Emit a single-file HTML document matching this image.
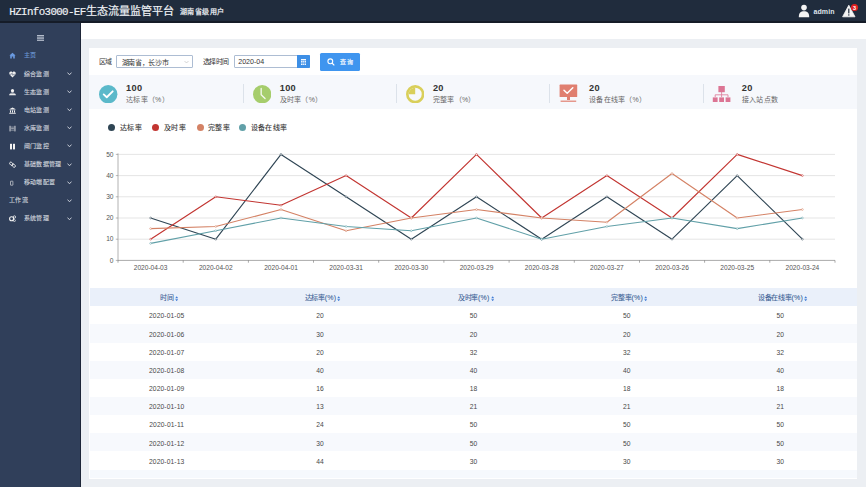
<!DOCTYPE html>
<html lang="zh-CN"><head><meta charset="utf-8">
<style>
*{margin:0;padding:0;box-sizing:border-box}
html,body{width:866px;height:487px;overflow:hidden;background:#eceff3;font-family:"Liberation Sans",sans-serif}
.abs{position:absolute}
#hdr{position:absolute;left:0;top:0;width:866px;height:21px;background:#202c3d}
#hdrline{position:absolute;left:0;top:21px;width:866px;height:1.6px;background:#151c28}
#title{position:absolute;left:9px;top:3.5px;color:#f2f4f8;font-size:10.4px;white-space:nowrap;line-height:14px}
#title .m{font-family:"Liberation Mono",monospace;font-size:9.7px;letter-spacing:-0.05px}
#title .sub{font-size:7.3px;font-weight:bold;margin-left:4px;vertical-align:0.5px}
#side{position:absolute;left:0;top:22.6px;width:80.5px;height:465px;background:#303f5a}
#sideedge{position:absolute;left:80px;top:22.6px;width:1px;height:465px;background:#1e2638}
.si{position:absolute;left:0;width:80px;height:18px;color:#c9ced8;font-size:6px;letter-spacing:0.22px;line-height:18px}
.si .t{position:absolute;left:24px;top:0;-webkit-text-stroke:0.12px currentColor}
.si .ic{position:absolute;left:9px;top:6px;width:7px;height:7px}
.si .ch{position:absolute;left:67.2px;top:7.6px;width:5px;height:3.6px}
#tabbar{position:absolute;left:81px;top:22.6px;width:785px;height:16.2px;background:#fff}
#card{position:absolute;left:89px;top:47.5px;width:768px;height:431px;background:#fff}
.lbl{position:absolute;font-size:7px;letter-spacing:-0.42px;color:#333;line-height:8px;white-space:nowrap}
#sel{position:absolute;left:116.4px;top:55.1px;width:76.2px;height:13.4px;border:0.7px solid #adbdd3;border-radius:1px;background:#fff}
#sel span{position:absolute;left:4.2px;top:2.6px;font-size:7px;letter-spacing:-0.32px;color:#333;line-height:8px;white-space:nowrap}
#date{position:absolute;left:233.7px;top:55.3px;width:76px;height:13px;border:0.7px solid #adbdd3;border-radius:1px;background:#fff}
#date span{position:absolute;left:3.5px;top:1.8px;font-size:7.1px;color:#333;line-height:8px}
#addon{position:absolute;left:297.3px;top:55.3px;width:12.6px;height:13px;background:#3d8fe6;border-radius:0 1px 1px 0}
#btn{position:absolute;left:319.8px;top:53.2px;width:40px;height:17.6px;background:#3f95ef;border-radius:1.5px}
#btn span{position:absolute;left:20.5px;top:4.5px;font-size:6px;letter-spacing:0.3px;color:#fff;line-height:8px;-webkit-text-stroke:0.15px #fff}
#stats{position:absolute;left:89px;top:75px;width:768px;height:33.6px;background:#f6f8fc}
.num{position:absolute;font-size:9.2px;font-weight:bold;color:#333;line-height:10px;letter-spacing:0.35px}
.sl{position:absolute;font-size:7px;letter-spacing:0.26px;color:#666;line-height:8px;white-space:nowrap}
.div{position:absolute;top:83.5px;width:0.8px;height:19px;background:#dce2ea}
.leg{position:absolute;font-size:7px;letter-spacing:0.3px;color:#333;line-height:9px;white-space:nowrap;top:123px;-webkit-text-stroke:0.1px #333}
.dot{position:absolute;width:7px;height:7px;border-radius:50%;top:124px}
#chart{position:absolute;left:0;top:0}
#chart text{font-size:6.6px;fill:#555;font-family:"Liberation Sans",sans-serif}
#thead{position:absolute;left:90px;top:287.8px;width:767px;height:17.8px;background:#eaf0fa}
.th{position:absolute;top:1.6px;padding-left:5px;width:153.4px;text-align:center;font-size:7px;letter-spacing:-0.3px;color:#3b5f95;line-height:17.5px;white-space:nowrap;-webkit-text-stroke:0.08px #3b5f95}
.tr{position:absolute;left:90px;width:767px;height:18.15px}
.td{position:absolute;top:1.2px;width:153.4px;text-align:center;font-size:6.7px;color:#474747;line-height:18.15px;letter-spacing:0.12px}
#tfoot{position:absolute;left:90px;top:469.7px;width:767px;height:8.8px;background:#f6f9fd}
</style></head><body>
<div id="hdr"></div><div id="hdrline"></div>
<div class="abs m" style="left:9.3px;top:3px;transform:scaleY(1.09);transform-origin:0 0;color:#eef1f5;font-family:'Liberation Mono',monospace;font-size:10.8px;line-height:16px;letter-spacing:-0.61px;white-space:nowrap;-webkit-text-stroke:0.18px #eef1f5">HZInfo3000-EF</div>
<div class="abs" style="left:85.5px;top:3.4px;color:#eef1f5;font-size:11px;line-height:16px;white-space:nowrap;-webkit-text-stroke:0.2px #eef1f5">生态流量监管平台</div>
<div class="abs" style="left:179.8px;top:6.6px;color:#e6e9ee;font-size:7px;letter-spacing:0.45px;line-height:10px;white-space:nowrap;-webkit-text-stroke:0.25px #e6e9ee">湖南省级用户</div>
<!-- user -->
<svg class="abs" style="left:797px;top:4px" width="14" height="14" viewBox="0 0 14 14">
 <circle cx="7" cy="3.6" r="2.8" fill="#f4f4f4"/>
 <path d="M1.8 13.2 C1.8 8.6 3.8 7.2 7 7.2 C10.2 7.2 12.2 8.6 12.2 13.2 Z" fill="#f4f4f4"/>
</svg>
<div class="abs" style="left:813.5px;top:6.6px;font-size:7px;font-weight:bold;color:#dfe3ea;letter-spacing:0.1px;line-height:9px">admin</div>
<svg class="abs" style="left:842px;top:3px" width="24" height="16" viewBox="0 0 24 16">
 <path d="M6.8 2.2 L13 13.8 L0.6 13.8 Z" fill="#f4f4f4" stroke="#f4f4f4" stroke-width="0.8" stroke-linejoin="round"/>
 <rect x="6.2" y="5.6" width="1.2" height="4.8" fill="#202c3d"/>
 <rect x="6.2" y="11.3" width="1.2" height="1.3" fill="#202c3d"/>
 <circle cx="12.5" cy="4.5" r="3.6" fill="#e02020"/>
 <text x="12.5" y="6.6" font-size="5.5" fill="#fff" text-anchor="middle" font-family="Liberation Sans" font-weight="bold">3</text>
</svg>

<div id="side"></div><div id="sideedge"></div>
<svg class="abs" style="left:36.7px;top:34.9px" width="7.4" height="5.9" viewBox="0 0 7.4 5.9">
 <rect x="0" y="0" width="7.4" height="1.05" fill="#b4bdcc"/><rect x="0" y="1.62" width="7.4" height="1.05" fill="#b4bdcc"/><rect x="0" y="3.24" width="7.4" height="1.05" fill="#b4bdcc"/><rect x="0" y="4.85" width="7.4" height="1.05" fill="#b4bdcc"/>
</svg>
<div class="si" style="top:46.2px;color:#6e9ad8"><span class="t" style="left:24px">主页</span><svg class="ic" viewBox="0 0 7 7"><path d="M3.5 0.8 L6.6 3.6 L5.8 3.6 L5.8 6.4 L4.2 6.4 L4.2 4.6 L2.8 4.6 L2.8 6.4 L1.2 6.4 L1.2 3.6 L0.4 3.6 Z" fill="#6a9ae0"/></svg></div>
<div class="si" style="top:64.5px;color:#cdd2db"><span class="t" style="left:24px">综合监测</span><svg class="ic" viewBox="0 0 7 7"><path d="M3.5 6.6 L0.6 3.4 C-0.2 2.2 0.6 0.6 1.9 0.6 C2.7 0.6 3.2 1.1 3.5 1.6 C3.8 1.1 4.3 0.6 5.1 0.6 C6.4 0.6 7.2 2.2 6.4 3.4 Z" fill="#f2f2f2"/><path d="M0.8 3.3 L2.4 3.3 L3 2.2 L3.9 4.4 L4.5 3.3 L6.2 3.3" fill="none" stroke="#303f5a" stroke-width="0.5"/></svg><svg class="ch" viewBox="0 0 5 3.6"><path d="M0.5 0.6 L2.5 2.8 L4.5 0.6" fill="none" stroke="#c9ced8" stroke-width="1"/></svg></div>
<div class="si" style="top:82.6px;color:#cdd2db"><span class="t" style="left:24px">生态监测</span><svg class="ic" viewBox="0 0 7 7"><circle cx="3.5" cy="1.7" r="1.6" fill="#f2f2f2"/><path d="M0.1 6.2 C0.3 4.2 1.6 3.4 3.5 3.4 C5.4 3.4 6.7 4.2 6.9 6.2 Z" fill="#f2f2f2"/><rect x="0" y="4.6" width="7" height="0.45" fill="#303f5a"/></svg><svg class="ch" viewBox="0 0 5 3.6"><path d="M0.5 0.6 L2.5 2.8 L4.5 0.6" fill="none" stroke="#c9ced8" stroke-width="1"/></svg></div>
<div class="si" style="top:100.7px;color:#cdd2db"><span class="t" style="left:24px">电站监测</span><svg class="ic" viewBox="0 0 7 7"><path d="M3.5 0.5 L6.8 2.2 L0.2 2.2 Z" fill="#f2f2f2"/><rect x="0.6" y="2.6" width="5.8" height="0.6" fill="#f2f2f2"/><rect x="1" y="3.4" width="1" height="2.2" fill="#f2f2f2"/><rect x="3" y="3.4" width="1" height="2.2" fill="#f2f2f2"/><rect x="5" y="3.4" width="1" height="2.2" fill="#f2f2f2"/><rect x="0.2" y="5.8" width="6.6" height="0.9" fill="#f2f2f2"/></svg><svg class="ch" viewBox="0 0 5 3.6"><path d="M0.5 0.6 L2.5 2.8 L4.5 0.6" fill="none" stroke="#c9ced8" stroke-width="1"/></svg></div>
<div class="si" style="top:118.8px;color:#cdd2db"><span class="t" style="left:24px">水库监测</span><svg class="ic" viewBox="0 0 7 7"><rect x="0.6" y="0.8" width="0.9" height="5.6" fill="#f2f2f2"/><rect x="5.5" y="0.8" width="0.9" height="5.6" fill="#f2f2f2"/><rect x="2.1" y="1.8" width="2.8" height="0.5" fill="#f2f2f2"/><rect x="2.1" y="3.3" width="2.8" height="0.5" fill="#f2f2f2"/><rect x="2.1" y="4.8" width="2.8" height="0.5" fill="#f2f2f2"/></svg><svg class="ch" viewBox="0 0 5 3.6"><path d="M0.5 0.6 L2.5 2.8 L4.5 0.6" fill="none" stroke="#c9ced8" stroke-width="1"/></svg></div>
<div class="si" style="top:136.9px;color:#cdd2db"><span class="t" style="left:24px">闸门监控</span><svg class="ic" viewBox="0 0 7 7"><rect x="1" y="0.8" width="2" height="5.6" fill="#f2f2f2"/><rect x="4" y="0.8" width="2" height="5.6" fill="#f2f2f2"/></svg><svg class="ch" viewBox="0 0 5 3.6"><path d="M0.5 0.6 L2.5 2.8 L4.5 0.6" fill="none" stroke="#c9ced8" stroke-width="1"/></svg></div>
<div class="si" style="top:155.0px;color:#cdd2db"><span class="t" style="left:24px">基础数据管理</span><svg class="ic" viewBox="0 0 7 7"><rect x="0.4" y="1.6" width="3.8" height="2.4" rx="1.2" transform="rotate(45 2.3 2.8)" fill="none" stroke="#f2f2f2" stroke-width="0.9"/><rect x="2.8" y="3.4" width="3.8" height="2.4" rx="1.2" transform="rotate(45 4.7 4.6)" fill="none" stroke="#f2f2f2" stroke-width="0.9"/></svg><svg class="ch" viewBox="0 0 5 3.6"><path d="M0.5 0.6 L2.5 2.8 L4.5 0.6" fill="none" stroke="#c9ced8" stroke-width="1"/></svg></div>
<div class="si" style="top:173.1px;color:#cdd2db"><span class="t" style="left:24px">移动端配置</span><svg class="ic" viewBox="0 0 7 7"><rect x="1.5" y="2.2" width="2.4" height="4" rx="0.3" fill="none" stroke="#f2f2f2" stroke-width="0.6"/></svg><svg class="ch" viewBox="0 0 5 3.6"><path d="M0.5 0.6 L2.5 2.8 L4.5 0.6" fill="none" stroke="#c9ced8" stroke-width="1"/></svg></div>
<div class="si" style="top:191.2px;color:#cdd2db"><span class="t" style="left:9.2px">工作流</span><svg class="ch" viewBox="0 0 5 3.6"><path d="M0.5 0.6 L2.5 2.8 L4.5 0.6" fill="none" stroke="#c9ced8" stroke-width="1"/></svg></div>
<div class="si" style="top:209.3px;color:#cdd2db"><span class="t" style="left:24px">系统管理</span><svg class="ic" viewBox="0 0 7 7"><circle cx="2.6" cy="3.8" r="2" fill="none" stroke="#f2f2f2" stroke-width="1.1"/><circle cx="5.4" cy="2" r="1.2" fill="none" stroke="#f2f2f2" stroke-width="0.8"/><circle cx="5.4" cy="5.6" r="1" fill="none" stroke="#f2f2f2" stroke-width="0.7"/></svg><svg class="ch" viewBox="0 0 5 3.6"><path d="M0.5 0.6 L2.5 2.8 L4.5 0.6" fill="none" stroke="#c9ced8" stroke-width="1"/></svg></div>

<div id="tabbar"></div>
<div id="card"></div>
<div class="lbl" style="left:98.5px;top:58.2px">区域</div>
<div id="sel"><span>湖南省，长沙市</span>
 <svg class="abs" style="left:67px;top:4.3px" width="5" height="4" viewBox="0 0 5 4"><path d="M0.5 1 L2.5 3 L4.5 1" fill="none" stroke="#bbb" stroke-width="0.6"/></svg>
</div>
<div class="lbl" style="left:202.5px;top:58.2px">选择时间</div>
<div id="date"><span>2020-04</span></div>
<div id="addon"><svg class="abs" style="left:3.6px;top:3.4px" width="5.6" height="6" viewBox="0 0 5.6 6">
 <rect x="0" y="0" width="5.6" height="6" fill="#f4f8fe"/><rect x="0" y="1.4" width="5.6" height="0.55" fill="#3d8fe6"/><rect x="0" y="2.95" width="5.6" height="0.5" fill="#3d8fe6"/><rect x="0" y="4.45" width="5.6" height="0.5" fill="#3d8fe6"/><rect x="1.6" y="1.4" width="0.5" height="4.6" fill="#3d8fe6"/><rect x="3.5" y="1.4" width="0.5" height="4.6" fill="#3d8fe6"/></svg></div>
<div id="btn"><svg class="abs" style="left:7.5px;top:4.7px" width="8" height="8" viewBox="0 0 8 8"><circle cx="3.3" cy="3.3" r="2.4" fill="none" stroke="#fff" stroke-width="1.1"/><path d="M5 5 L7.3 7.3" stroke="#fff" stroke-width="1.2"/></svg><span>查询</span></div>

<div id="stats"></div>
<svg class="abs" style="left:99.2px;top:84.8px" width="18.4" height="18.4" viewBox="0 0 18 18"><circle cx="9" cy="9" r="9" fill="#5bb9ca"/><path d="M4.6 9.2 L7.6 12 L13.4 6.2" fill="none" stroke="#fff" stroke-width="1.8" stroke-linecap="round" stroke-linejoin="round"/></svg><div class="num" style="left:126px;top:83px">100</div><div class="sl" style="left:126px;top:95.6px">达标率（%）</div>
<div class="div" style="left:243px"></div><svg class="abs" style="left:252.6px;top:84.6px" width="18.4" height="18.4" viewBox="0 0 18 18"><circle cx="9" cy="9" r="9" fill="#a6cd6c"/><path d="M8 3.4 L8 9.6 L11.8 13.2" fill="none" stroke="#f4f8ee" stroke-width="1.3" stroke-linecap="round" stroke-linejoin="round"/></svg><div class="num" style="left:279.7px;top:83px">100</div><div class="sl" style="left:279.7px;top:95.6px">及时率（%）</div>
<div class="div" style="left:396.2px"></div><svg class="abs" style="left:406px;top:84.9px" width="18.4" height="18.4" viewBox="0 0 18 18"><circle cx="9" cy="9" r="7.7" fill="none" stroke="#d9cf5a" stroke-width="2.6"/><path d="M9 9 L9 2.6 A6.4 6.4 0 0 0 2.6 9 Z" fill="#d9cf5a"/></svg><div class="num" style="left:432.9px;top:83px">20</div><div class="sl" style="left:432.9px;top:95.6px">完整率（%）</div>
<div class="div" style="left:549px"></div><svg class="abs" style="left:559px;top:84px" width="19" height="19" viewBox="0 0 19 19"><rect x="0.6" y="0.6" width="17.6" height="12.4" rx="0.6" fill="#e07f70"/><path d="M5 6.2 L8.2 9.2 L13.8 3.8" fill="none" stroke="#fff" stroke-width="1.5" stroke-linecap="round" stroke-linejoin="round"/><rect x="8" y="13" width="3" height="3" fill="#e07f70"/><rect x="1.6" y="16.6" width="15.6" height="1.2" fill="#e07f70"/></svg><div class="num" style="left:589px;top:83px">20</div><div class="sl" style="left:589px;top:95.6px">设备在线率（%）</div>
<div class="div" style="left:703px"></div><svg class="abs" style="left:712px;top:84.6px" width="19" height="18" viewBox="0 0 19 18"><rect x="6.4" y="1" width="6.4" height="6.2" fill="#dc7594"/><path d="M9.6 7 L9.6 9.8 M3.2 12 L3.2 9.8 L16 9.8 L16 12 M9.6 9.8 L9.6 12" fill="none" stroke="#dc7594" stroke-width="0.8"/><rect x="0.8" y="12.4" width="4.8" height="4.6" fill="#dc7594"/><rect x="7.2" y="12.4" width="4.8" height="4.6" fill="#dc7594"/><rect x="13.6" y="12.4" width="4.8" height="4.6" fill="#dc7594"/></svg><div class="num" style="left:741.8px;top:83px">20</div><div class="sl" style="left:741.8px;top:95.6px">接入站点数</div>

<div class="dot" style="left:108.0px;background:#2f4554"></div><div class="leg" style="left:120.2px">达标率</div>
<div class="dot" style="left:151.7px;background:#c23531"></div><div class="leg" style="left:164px">及时率</div>
<div class="dot" style="left:196.5px;background:#d48265"></div><div class="leg" style="left:208px">完整率</div>
<div class="dot" style="left:239.3px;background:#61a0a8"></div><div class="leg" style="left:250.9px">设备在线率</div>

<svg id="chart" width="866" height="487" viewBox="0 0 866 487">
<line x1="118" y1="239.2" x2="835" y2="239.2" stroke="#e2e2e2" stroke-width="0.9"/>
<text x="113.5" y="241.4" text-anchor="end">10</text>
<line x1="118" y1="218.0" x2="835" y2="218.0" stroke="#e2e2e2" stroke-width="0.9"/>
<text x="113.5" y="220.2" text-anchor="end">20</text>
<line x1="118" y1="196.8" x2="835" y2="196.8" stroke="#e2e2e2" stroke-width="0.9"/>
<text x="113.5" y="199.0" text-anchor="end">30</text>
<line x1="118" y1="175.6" x2="835" y2="175.6" stroke="#e2e2e2" stroke-width="0.9"/>
<text x="113.5" y="177.8" text-anchor="end">40</text>
<line x1="118" y1="154.4" x2="835" y2="154.4" stroke="#e2e2e2" stroke-width="0.9"/>
<text x="113.5" y="156.6" text-anchor="end">50</text>
<text x="113.5" y="262.6" text-anchor="end">0</text>
<line x1="118" y1="153.4" x2="118" y2="260.4" stroke="#999" stroke-width="0.75"/>
<line x1="115.8" y1="260.4" x2="118" y2="260.4" stroke="#8a8a8a" stroke-width="0.6"/>
<line x1="115.8" y1="239.2" x2="118" y2="239.2" stroke="#8a8a8a" stroke-width="0.6"/>
<line x1="115.8" y1="218.0" x2="118" y2="218.0" stroke="#8a8a8a" stroke-width="0.6"/>
<line x1="115.8" y1="196.8" x2="118" y2="196.8" stroke="#8a8a8a" stroke-width="0.6"/>
<line x1="115.8" y1="175.6" x2="118" y2="175.6" stroke="#8a8a8a" stroke-width="0.6"/>
<line x1="115.8" y1="154.4" x2="118" y2="154.4" stroke="#8a8a8a" stroke-width="0.6"/>
<line x1="118" y1="260.4" x2="835" y2="260.4" stroke="#6e6e6e" stroke-width="0.6"/>
<line x1="118.0" y1="260.4" x2="118.0" y2="262.7" stroke="#6e6e6e" stroke-width="0.6"/>
<line x1="183.2" y1="260.4" x2="183.2" y2="262.7" stroke="#6e6e6e" stroke-width="0.6"/>
<line x1="248.4" y1="260.4" x2="248.4" y2="262.7" stroke="#6e6e6e" stroke-width="0.6"/>
<line x1="313.5" y1="260.4" x2="313.5" y2="262.7" stroke="#6e6e6e" stroke-width="0.6"/>
<line x1="378.7" y1="260.4" x2="378.7" y2="262.7" stroke="#6e6e6e" stroke-width="0.6"/>
<line x1="443.9" y1="260.4" x2="443.9" y2="262.7" stroke="#6e6e6e" stroke-width="0.6"/>
<line x1="509.1" y1="260.4" x2="509.1" y2="262.7" stroke="#6e6e6e" stroke-width="0.6"/>
<line x1="574.3" y1="260.4" x2="574.3" y2="262.7" stroke="#6e6e6e" stroke-width="0.6"/>
<line x1="639.5" y1="260.4" x2="639.5" y2="262.7" stroke="#6e6e6e" stroke-width="0.6"/>
<line x1="704.6" y1="260.4" x2="704.6" y2="262.7" stroke="#6e6e6e" stroke-width="0.6"/>
<line x1="769.8" y1="260.4" x2="769.8" y2="262.7" stroke="#6e6e6e" stroke-width="0.6"/>
<line x1="835.0" y1="260.4" x2="835.0" y2="262.7" stroke="#6e6e6e" stroke-width="0.6"/>
<text x="150.6" y="269.7" text-anchor="middle">2020-04-03</text>
<text x="215.8" y="269.7" text-anchor="middle">2020-04-02</text>
<text x="281.0" y="269.7" text-anchor="middle">2020-04-01</text>
<text x="346.1" y="269.7" text-anchor="middle">2020-03-31</text>
<text x="411.3" y="269.7" text-anchor="middle">2020-03-30</text>
<text x="476.5" y="269.7" text-anchor="middle">2020-03-29</text>
<text x="541.7" y="269.7" text-anchor="middle">2020-03-28</text>
<text x="606.9" y="269.7" text-anchor="middle">2020-03-27</text>
<text x="672.0" y="269.7" text-anchor="middle">2020-03-26</text>
<text x="737.2" y="269.7" text-anchor="middle">2020-03-25</text>
<text x="802.4" y="269.7" text-anchor="middle">2020-03-24</text>
<polyline points="150.6,218.0 215.8,239.2 281.0,154.4 346.1,196.8 411.3,239.2 476.5,196.8 541.7,239.2 606.9,196.8 672.0,239.2 737.2,175.6 802.4,239.2" fill="none" stroke="#2f4554" stroke-width="1.15" stroke-linejoin="round"/>
<circle cx="150.6" cy="218.0" r="0.9" fill="#fff" stroke="#2f4554" stroke-width="0.5"/>
<circle cx="215.8" cy="239.2" r="0.9" fill="#fff" stroke="#2f4554" stroke-width="0.5"/>
<circle cx="281.0" cy="154.4" r="0.9" fill="#fff" stroke="#2f4554" stroke-width="0.5"/>
<circle cx="346.1" cy="196.8" r="0.9" fill="#fff" stroke="#2f4554" stroke-width="0.5"/>
<circle cx="411.3" cy="239.2" r="0.9" fill="#fff" stroke="#2f4554" stroke-width="0.5"/>
<circle cx="476.5" cy="196.8" r="0.9" fill="#fff" stroke="#2f4554" stroke-width="0.5"/>
<circle cx="541.7" cy="239.2" r="0.9" fill="#fff" stroke="#2f4554" stroke-width="0.5"/>
<circle cx="606.9" cy="196.8" r="0.9" fill="#fff" stroke="#2f4554" stroke-width="0.5"/>
<circle cx="672.0" cy="239.2" r="0.9" fill="#fff" stroke="#2f4554" stroke-width="0.5"/>
<circle cx="737.2" cy="175.6" r="0.9" fill="#fff" stroke="#2f4554" stroke-width="0.5"/>
<circle cx="802.4" cy="239.2" r="0.9" fill="#fff" stroke="#2f4554" stroke-width="0.5"/>
<polyline points="150.6,239.2 215.8,196.8 281.0,205.3 346.1,175.6 411.3,218.0 476.5,154.4 541.7,218.0 606.9,175.6 672.0,218.0 737.2,154.4 802.4,175.6" fill="none" stroke="#c23531" stroke-width="1.15" stroke-linejoin="round"/>
<circle cx="150.6" cy="239.2" r="0.9" fill="#fff" stroke="#c23531" stroke-width="0.5"/>
<circle cx="215.8" cy="196.8" r="0.9" fill="#fff" stroke="#c23531" stroke-width="0.5"/>
<circle cx="281.0" cy="205.3" r="0.9" fill="#fff" stroke="#c23531" stroke-width="0.5"/>
<circle cx="346.1" cy="175.6" r="0.9" fill="#fff" stroke="#c23531" stroke-width="0.5"/>
<circle cx="411.3" cy="218.0" r="0.9" fill="#fff" stroke="#c23531" stroke-width="0.5"/>
<circle cx="476.5" cy="154.4" r="0.9" fill="#fff" stroke="#c23531" stroke-width="0.5"/>
<circle cx="541.7" cy="218.0" r="0.9" fill="#fff" stroke="#c23531" stroke-width="0.5"/>
<circle cx="606.9" cy="175.6" r="0.9" fill="#fff" stroke="#c23531" stroke-width="0.5"/>
<circle cx="672.0" cy="218.0" r="0.9" fill="#fff" stroke="#c23531" stroke-width="0.5"/>
<circle cx="737.2" cy="154.4" r="0.9" fill="#fff" stroke="#c23531" stroke-width="0.5"/>
<circle cx="802.4" cy="175.6" r="0.9" fill="#fff" stroke="#c23531" stroke-width="0.5"/>
<polyline points="150.6,228.6 215.8,226.5 281.0,209.5 346.1,230.7 411.3,218.0 476.5,209.5 541.7,218.0 606.9,222.2 672.0,173.5 737.2,218.0 802.4,209.5" fill="none" stroke="#d48265" stroke-width="1.15" stroke-linejoin="round"/>
<circle cx="150.6" cy="228.6" r="0.9" fill="#fff" stroke="#d48265" stroke-width="0.5"/>
<circle cx="215.8" cy="226.5" r="0.9" fill="#fff" stroke="#d48265" stroke-width="0.5"/>
<circle cx="281.0" cy="209.5" r="0.9" fill="#fff" stroke="#d48265" stroke-width="0.5"/>
<circle cx="346.1" cy="230.7" r="0.9" fill="#fff" stroke="#d48265" stroke-width="0.5"/>
<circle cx="411.3" cy="218.0" r="0.9" fill="#fff" stroke="#d48265" stroke-width="0.5"/>
<circle cx="476.5" cy="209.5" r="0.9" fill="#fff" stroke="#d48265" stroke-width="0.5"/>
<circle cx="541.7" cy="218.0" r="0.9" fill="#fff" stroke="#d48265" stroke-width="0.5"/>
<circle cx="606.9" cy="222.2" r="0.9" fill="#fff" stroke="#d48265" stroke-width="0.5"/>
<circle cx="672.0" cy="173.5" r="0.9" fill="#fff" stroke="#d48265" stroke-width="0.5"/>
<circle cx="737.2" cy="218.0" r="0.9" fill="#fff" stroke="#d48265" stroke-width="0.5"/>
<circle cx="802.4" cy="209.5" r="0.9" fill="#fff" stroke="#d48265" stroke-width="0.5"/>
<polyline points="150.6,243.4 215.8,230.7 281.0,218.0 346.1,226.5 411.3,230.7 476.5,218.0 541.7,239.2 606.9,226.5 672.0,218.0 737.2,228.6 802.4,218.0" fill="none" stroke="#61a0a8" stroke-width="1.15" stroke-linejoin="round"/>
<circle cx="150.6" cy="243.4" r="0.9" fill="#fff" stroke="#61a0a8" stroke-width="0.5"/>
<circle cx="215.8" cy="230.7" r="0.9" fill="#fff" stroke="#61a0a8" stroke-width="0.5"/>
<circle cx="281.0" cy="218.0" r="0.9" fill="#fff" stroke="#61a0a8" stroke-width="0.5"/>
<circle cx="346.1" cy="226.5" r="0.9" fill="#fff" stroke="#61a0a8" stroke-width="0.5"/>
<circle cx="411.3" cy="230.7" r="0.9" fill="#fff" stroke="#61a0a8" stroke-width="0.5"/>
<circle cx="476.5" cy="218.0" r="0.9" fill="#fff" stroke="#61a0a8" stroke-width="0.5"/>
<circle cx="541.7" cy="239.2" r="0.9" fill="#fff" stroke="#61a0a8" stroke-width="0.5"/>
<circle cx="606.9" cy="226.5" r="0.9" fill="#fff" stroke="#61a0a8" stroke-width="0.5"/>
<circle cx="672.0" cy="218.0" r="0.9" fill="#fff" stroke="#61a0a8" stroke-width="0.5"/>
<circle cx="737.2" cy="228.6" r="0.9" fill="#fff" stroke="#61a0a8" stroke-width="0.5"/>
<circle cx="802.4" cy="218.0" r="0.9" fill="#fff" stroke="#61a0a8" stroke-width="0.5"/>
</svg>

<div id="thead">
 <div class="th" style="left:0">时间<svg width="3.4" height="5.4" viewBox="0 0 3 5" style="vertical-align:-0.6px;margin-left:1px"><path d="M1.5 0.2 L2.9 2.1 L0.1 2.1 Z M1.5 4.8 L2.9 2.9 L0.1 2.9 Z" fill="#3f7bd6"/></svg></div>
 <div class="th" style="left:153.4px">达标率<span style="letter-spacing:0.25px">(%)</span><svg width="3.4" height="5.4" viewBox="0 0 3 5" style="vertical-align:-0.6px;margin-left:1px"><path d="M1.5 0.2 L2.9 2.1 L0.1 2.1 Z M1.5 4.8 L2.9 2.9 L0.1 2.9 Z" fill="#3f7bd6"/></svg></div>
 <div class="th" style="left:306.8px">及时率<span style="letter-spacing:0.25px">(%)</span><svg width="3.4" height="5.4" viewBox="0 0 3 5" style="vertical-align:-0.6px;margin-left:1px"><path d="M1.5 0.2 L2.9 2.1 L0.1 2.1 Z M1.5 4.8 L2.9 2.9 L0.1 2.9 Z" fill="#3f7bd6"/></svg></div>
 <div class="th" style="left:460.2px">完整率<span style="letter-spacing:0.25px">(%)</span><svg width="3.4" height="5.4" viewBox="0 0 3 5" style="vertical-align:-0.6px;margin-left:1px"><path d="M1.5 0.2 L2.9 2.1 L0.1 2.1 Z M1.5 4.8 L2.9 2.9 L0.1 2.9 Z" fill="#3f7bd6"/></svg></div>
 <div class="th" style="left:613.6px">设备在线率<span style="letter-spacing:0.25px">(%)</span><svg width="3.4" height="5.4" viewBox="0 0 3 5" style="vertical-align:-0.6px;margin-left:1px"><path d="M1.5 0.2 L2.9 2.1 L0.1 2.1 Z M1.5 4.8 L2.9 2.9 L0.1 2.9 Z" fill="#3f7bd6"/></svg></div>
</div>
<div class="tr" style="top:306.30px;background:#ffffff"><div class="td" style="left:0.0px">2020-01-05</div><div class="td" style="left:153.4px">20</div><div class="td" style="left:306.8px">50</div><div class="td" style="left:460.2px">50</div><div class="td" style="left:613.6px">50</div></div>
<div class="tr" style="top:324.45px;background:#f7f9fd"><div class="td" style="left:0.0px">2020-01-06</div><div class="td" style="left:153.4px">30</div><div class="td" style="left:306.8px">20</div><div class="td" style="left:460.2px">20</div><div class="td" style="left:613.6px">20</div></div>
<div class="tr" style="top:342.60px;background:#ffffff"><div class="td" style="left:0.0px">2020-01-07</div><div class="td" style="left:153.4px">20</div><div class="td" style="left:306.8px">32</div><div class="td" style="left:460.2px">32</div><div class="td" style="left:613.6px">32</div></div>
<div class="tr" style="top:360.75px;background:#f7f9fd"><div class="td" style="left:0.0px">2020-01-08</div><div class="td" style="left:153.4px">40</div><div class="td" style="left:306.8px">40</div><div class="td" style="left:460.2px">40</div><div class="td" style="left:613.6px">40</div></div>
<div class="tr" style="top:378.90px;background:#ffffff"><div class="td" style="left:0.0px">2020-01-09</div><div class="td" style="left:153.4px">16</div><div class="td" style="left:306.8px">18</div><div class="td" style="left:460.2px">18</div><div class="td" style="left:613.6px">18</div></div>
<div class="tr" style="top:397.05px;background:#f7f9fd"><div class="td" style="left:0.0px">2020-01-10</div><div class="td" style="left:153.4px">13</div><div class="td" style="left:306.8px">21</div><div class="td" style="left:460.2px">21</div><div class="td" style="left:613.6px">21</div></div>
<div class="tr" style="top:415.20px;background:#ffffff"><div class="td" style="left:0.0px">2020-01-11</div><div class="td" style="left:153.4px">24</div><div class="td" style="left:306.8px">50</div><div class="td" style="left:460.2px">50</div><div class="td" style="left:613.6px">50</div></div>
<div class="tr" style="top:433.35px;background:#f7f9fd"><div class="td" style="left:0.0px">2020-01-12</div><div class="td" style="left:153.4px">30</div><div class="td" style="left:306.8px">50</div><div class="td" style="left:460.2px">50</div><div class="td" style="left:613.6px">50</div></div>
<div class="tr" style="top:451.50px;background:#ffffff"><div class="td" style="left:0.0px">2020-01-13</div><div class="td" style="left:153.4px">44</div><div class="td" style="left:306.8px">30</div><div class="td" style="left:460.2px">30</div><div class="td" style="left:613.6px">30</div></div>
<div id="tfoot"></div>
</body></html>
